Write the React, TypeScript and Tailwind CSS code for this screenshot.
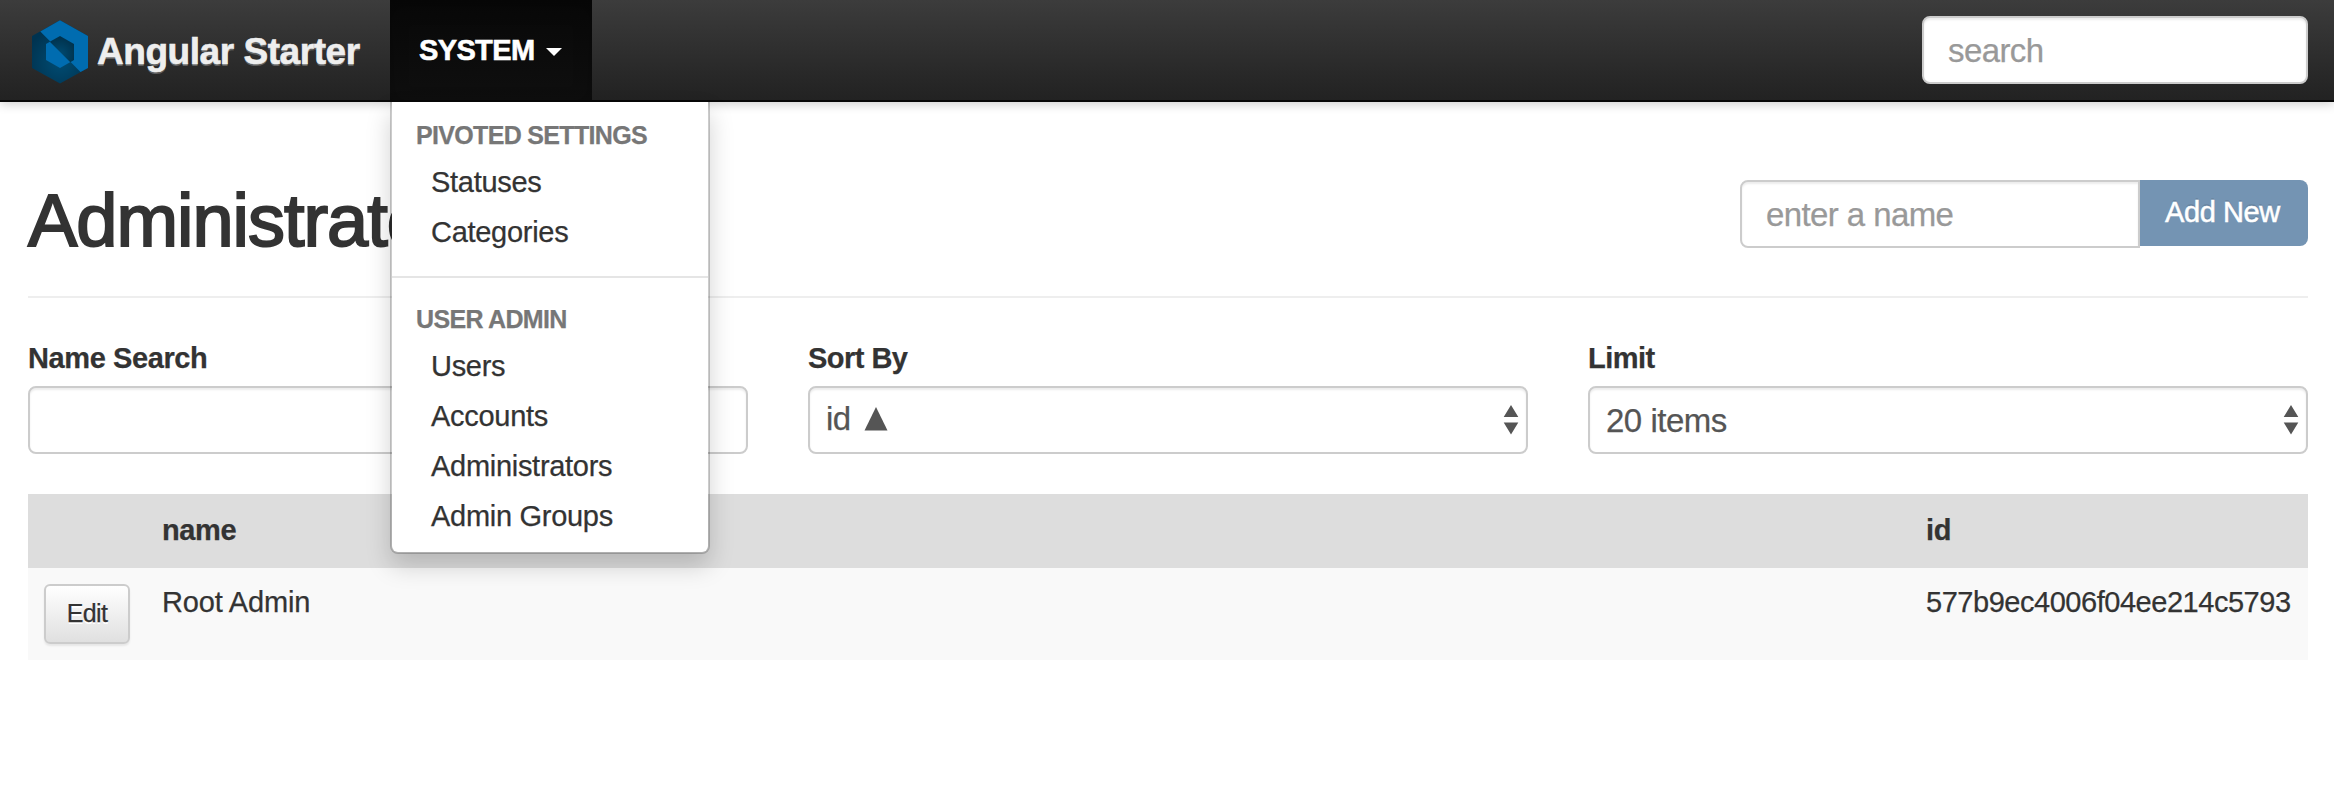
import React from "react";

const field =
  "h-[68px] border-2 border-[#ccc] bg-white text-[33px] tracking-[-0.018em] leading-[44px] shadow-[inset_0_2px_2px_rgba(0,0,0,0.075)]";

function Logo() {
  return (
    <svg width="56" height="64" viewBox="0 0 56 64" className="block">
      <defs>
        <radialGradient id="shade" gradientUnits="userSpaceOnUse" cx="28" cy="42" r="34">
          <stop offset="0" stopColor="#004c73" />
          <stop offset="1" stopColor="#003350" />
        </radialGradient>
        <radialGradient id="core" gradientUnits="userSpaceOnUse" cx="28" cy="34" r="18">
          <stop offset="0" stopColor="#004a70" />
          <stop offset="1" stopColor="#00304a" />
        </radialGradient>
      </defs>
      <path d="M28 0.3 56 16V48L28 63.5 0 48V16Z" fill="url(#shade)" />
      <path d="M8.3 11.5 28 0.3 56 16V48L48.5 52Z" fill="#006cb0" />
      <path d="M28 16 42 24V40L28 48 14 40V24Z" fill="#006cb0" />
      <path d="M17.8 21.8 28 16 42 24V40L38.3 42.2Z" fill="url(#core)" />
    </svg>
  );
}

function Arrows() {
  return (
    <svg width="16" height="30" viewBox="0 0 16 30" className="block shrink-0">
      <path d="M8 0 15.3 12H0.7ZM8 29.5 15.3 17.5H0.7Z" fill="#555" />
    </svg>
  );
}

function Section({ title, items }: { title: string; items: string[] }) {
  return (
    <>
      <div className="h-[46px] pt-1.5 pl-6 text-[25px] leading-[34px] font-bold tracking-[-0.027em] text-[#777]">
        {title}
      </div>
      <ul>
        {items.map((item) => (
          <li key={item} className="h-[50px] pl-[39px] text-[29px] leading-[48px] tracking-[-0.01em]">
            {item}
          </li>
        ))}
      </ul>
    </>
  );
}

function SelectBox({ label, children }: { label: string; children: React.ReactNode }) {
  return (
    <div className="flex-1">
      <div className="h-12 font-bold tracking-[-0.018em]">{label}</div>
      <div className={field + " flex items-center justify-between rounded-lg pr-[7px] pl-4 text-[#555]"}>
        {children}
        <Arrows />
      </div>
    </div>
  );
}

export default function App() {
  return (
    <div className="h-[788px] w-[2334px] overflow-hidden bg-white font-['Liberation_Sans',Arial,sans-serif] text-[29px] leading-10 tracking-[-0.014em] text-[#333] [-webkit-text-stroke-width:0.25px]">
      <nav className="relative z-10 flex h-[102px] items-start border-b-2 border-[#080808] bg-linear-to-b from-[#3c3c3c] to-[#222] shadow-[0_2px_10px_rgba(0,0,0,0.2)]">
        <div className="flex h-[100px] w-[390px] items-start pt-5 pl-8">
          <Logo />
          <span className="pt-2 pl-[9px] text-[37px] leading-[48px] font-bold tracking-[-0.012em] whitespace-nowrap text-[#eee] [-webkit-text-stroke-width:0.6px] [text-shadow:0_2px_0_rgba(255,255,255,0.25)]">
            Angular Starter
          </span>
        </div>
        <div className="relative h-[100px] w-[202px]">
          <div className="flex h-full items-start bg-linear-to-b from-[#080808] to-[#0f0f0f] pt-[30px] pl-[29px] shadow-[inset_0_6px_18px_rgba(0,0,0,0.25)]">
            <span className="w-[127px] font-bold tracking-[-0.022em] text-white [-webkit-text-stroke-width:0.6px]">
              SYSTEM
            </span>
            <svg width="16" height="8" viewBox="0 0 16 8" className="mt-[18px]">
              <path d="M0 0H16L8 8Z" fill="#fff" />
            </svg>
          </div>
          <div className="absolute top-[102px] left-0 h-[452px] w-[320px] rounded-b-lg border-2 border-t-0 border-black/20 bg-white bg-clip-padding pt-[10px] shadow-[0_12px_24px_rgba(0,0,0,0.175)]">
            <Section title="PIVOTED SETTINGS" items={["Statuses", "Categories"]} />
            <div className="mt-[18px] mb-[18px] h-0.5 bg-[#e5e5e5]" />
            <Section title="USER ADMIN" items={["Users", "Accounts", "Administrators", "Admin Groups"]} />
          </div>
        </div>
        <div className={field + " mt-4 mr-[26px] ml-auto w-[386px] rounded-lg px-6 pt-[11px] text-[#999]"}>search</div>
      </nav>

      <main className="ml-7 w-[2280px]">
        <header className="flex h-[196px] items-start justify-between border-b-2 border-[#eee] pt-[78px]">
          <h1 className="pt-px text-[74px] leading-[80px] tracking-[-0.014em] [-webkit-text-stroke:2px_#333]">
            Administrators
          </h1>
          <div className="flex items-start">
            <div className={field + " w-[400px] rounded-l-lg px-6 pt-[11px] text-[#999]"}>enter a name</div>
            <div className="h-[66px] w-[168px] rounded-r-lg bg-[#7494b3] pt-3 pl-[25px] whitespace-nowrap text-white [-webkit-text-stroke-width:0.5px] [text-shadow:0_-2px_0_rgba(0,0,0,0.1)]">
              Add New
            </div>
          </div>
        </header>

        <div className="mt-10 flex gap-[60px]">
          <div className="flex-1">
            <div className="h-12 font-bold">Name Search</div>
            <div className={field + " rounded-lg"} />
          </div>
          <SelectBox label="Sort By">
            <div className="flex items-center gap-[13px]">
              <span className="-mt-0.5">id</span>
              <svg width="24" height="24" viewBox="0 0 24 24" className="-mt-0.5">
                <path d="M12 0 23.5 23.5H0.5Z" fill="#555" />
              </svg>
            </div>
          </SelectBox>
          <SelectBox label="Limit">
            <span className="mt-px tracking-[-0.015em]">20 items</span>
          </SelectBox>
        </div>

        <div className="mt-10">
          <div className="flex h-[74px] bg-[#ddd] pt-4 font-bold">
            <div className="w-[134px]" />
            <div className="w-[1764px]">name</div>
            <div>id</div>
          </div>
          <div className="flex h-[92px] bg-[#f9f9f9] pt-4">
            <div className="w-[134px] pl-4">
              <div className="h-[60px] w-[86px] rounded-md border-2 border-[#ccc] bg-linear-to-b from-white to-[#e0e0e0] pt-[9px] text-center text-[25px] leading-9 tracking-[-0.025em] shadow-[0_2px_2px_rgba(0,0,0,0.075)] [text-shadow:0_2px_0_#fff]">
                Edit
              </div>
            </div>
            <div className="-mt-0.5 w-[1764px] tracking-[-0.006em]">Root Admin</div>
            <div className="-mt-0.5 tracking-[-0.016em]">577b9ec4006f04ee214c5793</div>
          </div>
        </div>
      </main>
    </div>
  );
}
